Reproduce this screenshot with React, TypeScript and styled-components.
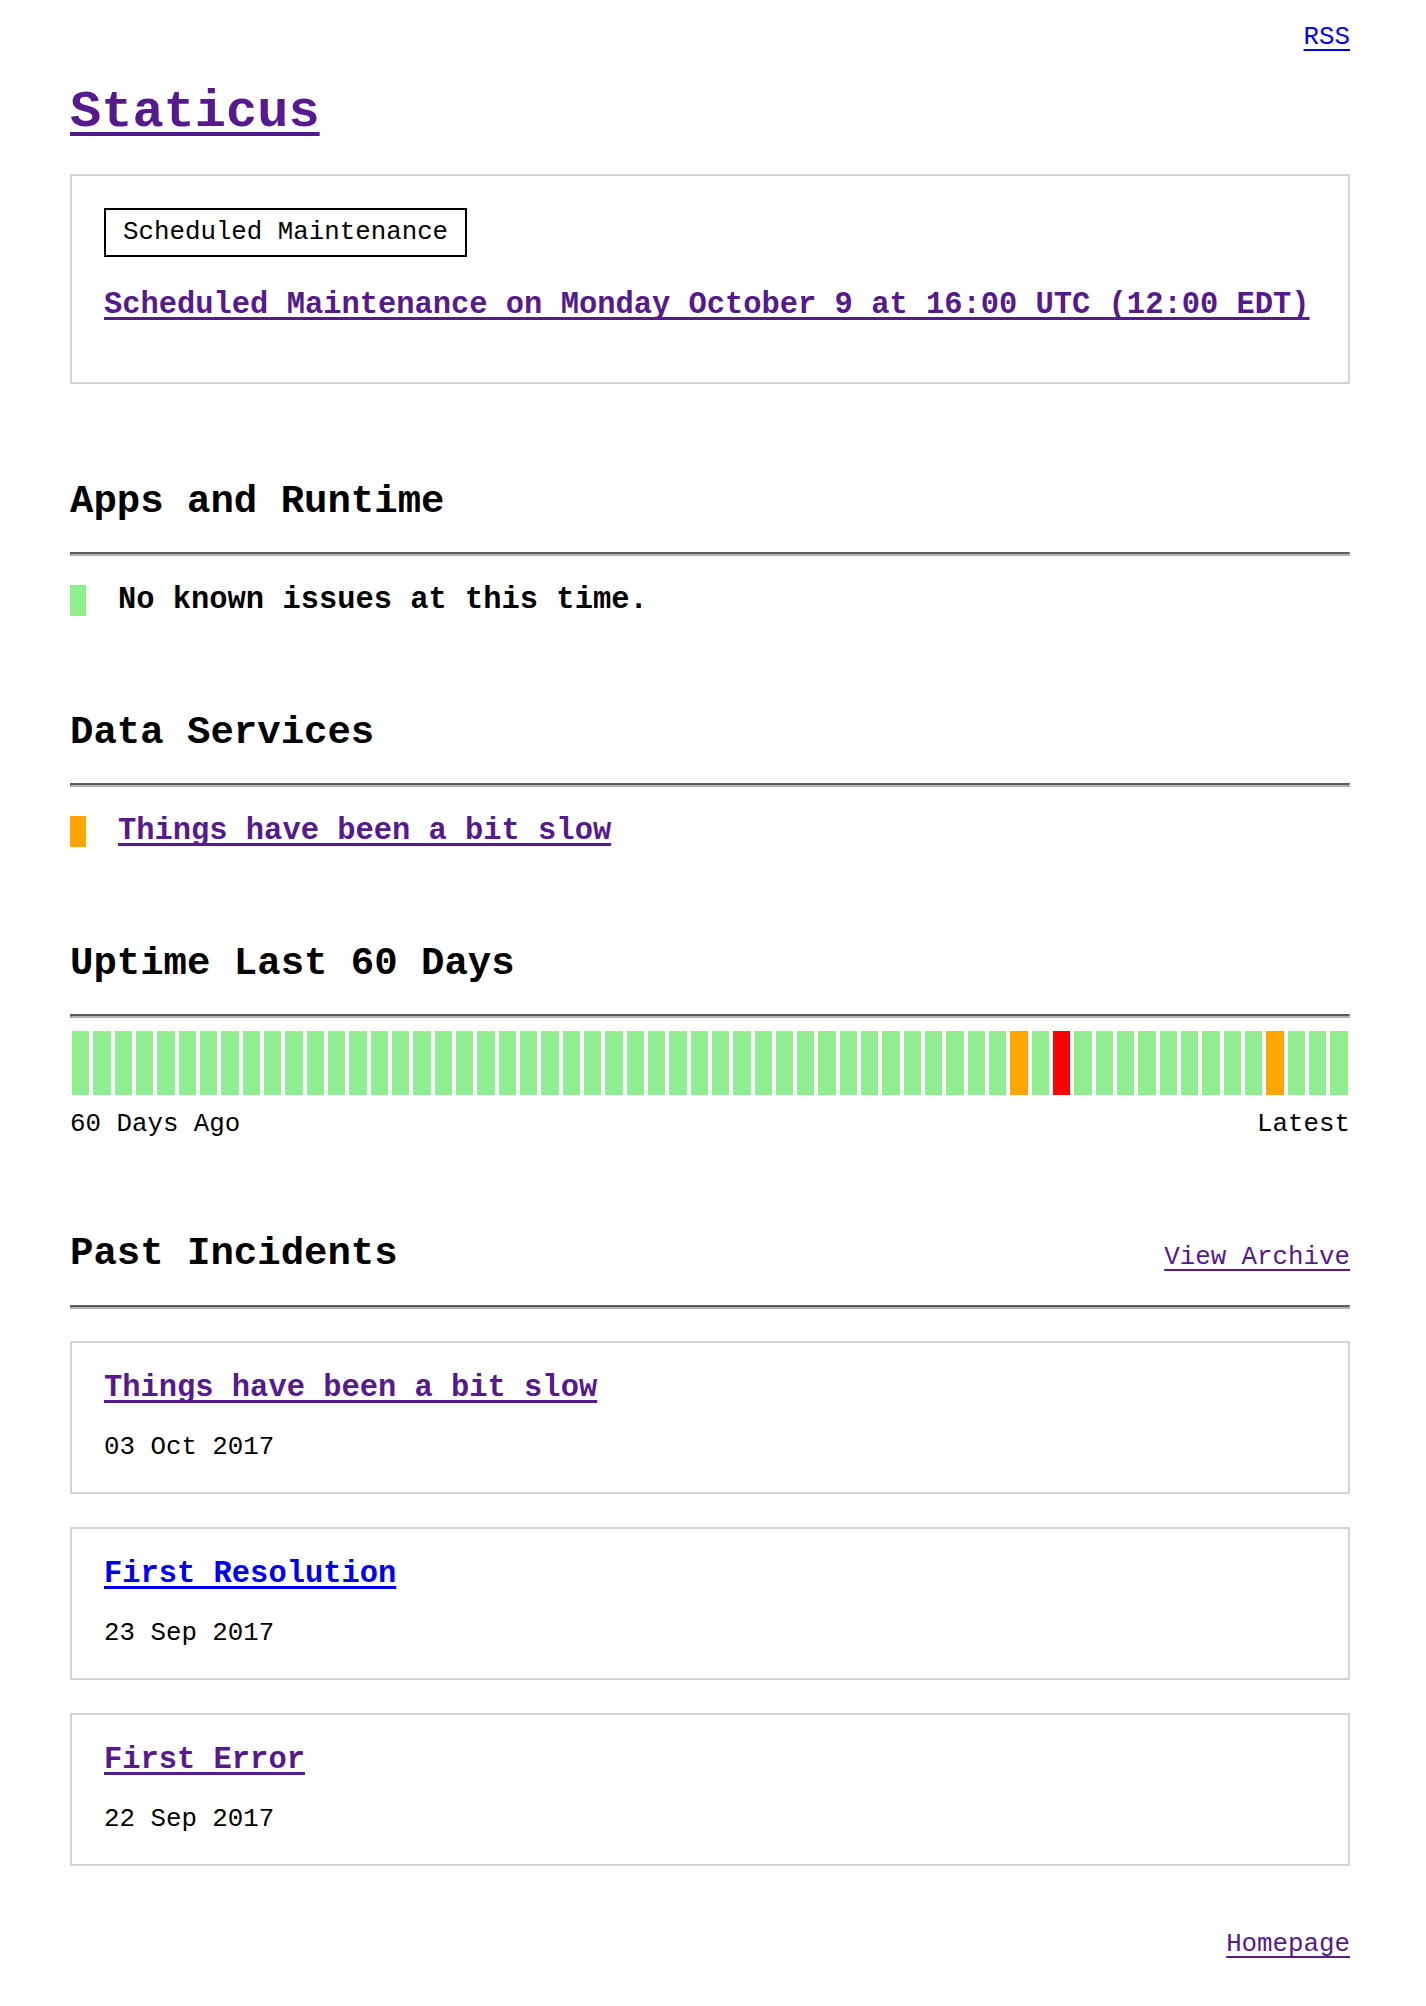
import React from "react";
import styled, { createGlobalStyle } from "styled-components";

type Status = "ok" | "slow" | "down";

const statusColor: Record<Status, string> = {
  ok: "#90ee90",
  slow: "#ffa500",
  down: "#ff0000",
};

const GlobalStyle = createGlobalStyle`
  html, body {
    margin: 0;
    padding: 0;
    background: #ffffff;
  }
  body {
    font-family: "Liberation Mono", "Courier New", monospace;
    font-size: 25.8px;
    line-height: normal;
    color: #000000;
  }
`;

const Page = styled.div`
  width: 1280px;
  margin: 0 76px 0 70px;
  padding: 23px 0 48px;
`;

const TopBar = styled.div`
  display: flex;
  justify-content: flex-end;
`;

const FooterBar = styled.div`
  display: flex;
  justify-content: flex-end;
  margin-top: 64px;
`;

type LinkSize = "small" | "medium" | "large";

const underline: Record<LinkSize, { thick: string; offset: string }> = {
  small: { thick: "1.6px", offset: "4.5px" },
  medium: { thick: "2.6px", offset: "3.5px" },
  large: { thick: "4px", offset: "6.3px" },
};

const Anchor = styled.a<{ $fresh?: boolean; $size: LinkSize }>`
  color: ${(p) => (p.$fresh ? "#0000ee" : "#551a8b")};
  text-decoration: underline;
  text-decoration-thickness: ${(p) => underline[p.$size].thick};
  text-underline-offset: ${(p) => underline[p.$size].offset};
  text-decoration-skip-ink: none;
  cursor: pointer;
`;

const SiteTitle = styled.h1`
  margin: 31px 0 32px;
  font-size: 52px;
  font-weight: bold;
  line-height: normal;
`;

const Announcement = styled.section`
  border: 2px solid #d3d3d3;
  padding: 32px;
`;

const Badge = styled.div`
  width: fit-content;
  border: 2px solid #000000;
  padding: 8px 17px;
  font-size: 25.8px;
`;

const AnnouncementHeading = styled.h3`
  margin: 31px 0 28px;
  font-size: 30.45px;
  font-weight: bold;
  line-height: normal;
`;

const Section = styled.section<{ $first?: boolean }>`
  margin-top: ${(p) => (p.$first ? "95.5px" : "93.5px")};
`;

const SectionHeading = styled.h2`
  margin: 0;
  font-size: 39px;
  font-weight: bold;
  line-height: normal;
`;

const HeadingRow = styled.div`
  display: flex;
  justify-content: space-between;
  align-items: baseline;
`;

const Rule = styled.hr`
  margin: 28.5px 0 0;
  height: 0;
  border-style: solid;
  border-width: 2px 1px;
  border-color: #5c5c5c #b3b3b3 #b3b3b3 #5c5c5c;
`;

const StatusRow = styled.div`
  display: flex;
  align-items: center;
  gap: 32px;
  margin-top: 27px;
`;

const Indicator = styled.span<{ $status: Status }>`
  flex: none;
  width: 16px;
  height: 31px;
  background: ${(p) => statusColor[p.$status]};
`;

const StatusText = styled.span`
  font-size: 30.45px;
  font-weight: bold;
`;

const Bars = styled.div`
  display: flex;
  height: 64px;
  margin-top: 13px;
`;

const Bar = styled.div<{ $status: Status }>`
  flex: 1 1 0;
  margin: 0 2px;
  background: ${(p) => statusColor[p.$status]};
`;

const Legend = styled.div`
  display: flex;
  justify-content: space-between;
  margin-top: 14.8px;
`;

const CardList = styled.div`
  display: flex;
  flex-direction: column;
  gap: 33px;
  margin-top: 32px;
`;

const Card = styled.article`
  border: 2px solid #d3d3d3;
  padding: 28px 32px 30px;
`;

const CardTitle = styled.h3`
  margin: 0 0 28px;
  font-size: 30.45px;
  font-weight: bold;
  line-height: normal;
`;

const CardDate = styled.div`
  font-size: 25.8px;
`;

const uptime: Status[] = Array.from({ length: 60 }, (_, i) =>
  i === 44 || i === 56 ? "slow" : i === 46 ? "down" : "ok"
);

const incidents = [
  { title: "Things have been a bit slow", date: "03 Oct 2017", fresh: false },
  { title: "First Resolution", date: "23 Sep 2017", fresh: true },
  { title: "First Error", date: "22 Sep 2017", fresh: false },
];

export default function App() {
  return (
    <>
      <GlobalStyle />
      <Page>
        <TopBar>
          <Anchor $fresh $size="small">RSS</Anchor>
        </TopBar>

        <SiteTitle>
          <Anchor $size="large">Staticus</Anchor>
        </SiteTitle>

        <Announcement>
          <Badge>Scheduled Maintenance</Badge>
          <AnnouncementHeading>
            <Anchor $size="medium">
              Scheduled Maintenance on Monday October 9 at 16:00 UTC (12:00 EDT)
            </Anchor>
          </AnnouncementHeading>
        </Announcement>

        <Section $first>
          <SectionHeading>Apps and Runtime</SectionHeading>
          <Rule />
          <StatusRow>
            <Indicator $status="ok" />
            <StatusText>No known issues at this time.</StatusText>
          </StatusRow>
        </Section>

        <Section>
          <SectionHeading>Data Services</SectionHeading>
          <Rule />
          <StatusRow>
            <Indicator $status="slow" />
            <StatusText>
              <Anchor $size="medium">Things have been a bit slow</Anchor>
            </StatusText>
          </StatusRow>
        </Section>

        <Section>
          <SectionHeading>Uptime Last 60 Days</SectionHeading>
          <Rule />
          <Bars>
            {uptime.map((s, i) => (
              <Bar key={i} $status={s} />
            ))}
          </Bars>
          <Legend>
            <span>60 Days Ago</span>
            <span>Latest</span>
          </Legend>
        </Section>

        <Section>
          <HeadingRow>
            <SectionHeading>Past Incidents</SectionHeading>
            <Anchor $size="small">View Archive</Anchor>
          </HeadingRow>
          <Rule />
          <CardList>
            {incidents.map((inc) => (
              <Card key={inc.title}>
                <CardTitle>
                  <Anchor $fresh={inc.fresh} $size="medium">
                    {inc.title}
                  </Anchor>
                </CardTitle>
                <CardDate>{inc.date}</CardDate>
              </Card>
            ))}
          </CardList>
        </Section>

        <FooterBar>
          <Anchor $size="small">Homepage</Anchor>
        </FooterBar>
      </Page>
    </>
  );
}
